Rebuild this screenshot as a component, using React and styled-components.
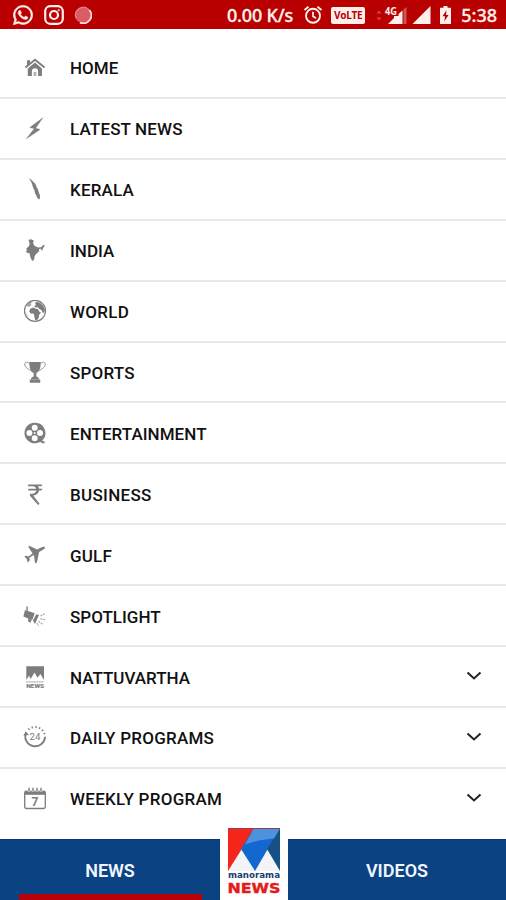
import React from "react";
import styled, { createGlobalStyle } from "styled-components";
import { FaWhatsapp } from "react-icons/fa";

const GlobalStyle = createGlobalStyle`
  * {
    box-sizing: border-box;
  }

  body {
    margin: 0;
    background: #fff;
    font-family: Roboto, "Liberation Sans", sans-serif;
  }
`;

const icons = {
  home: (
    <>
      <path d="M4 4.3h3v3.2L4 10z" />
      <path d="M12 2.400 1.800 10.8l1.200 1.500 9-7.200 9 7.200 1.200-1.500z" />
      <path d="M12 6.600 4.800 12.400V20h4.100v-4.600a3.100 3.100 0 0 1 6.200 0V20h3.800v-7.600z" />
      <path d="M10.600 16h2.800v4h-2.800z" opacity=".6" />
    </>
  ),
  bolt: <path d="M19.600 1 6.800 10.600l4.600 1L3.600 21.600 17 12.500l-4.500-1.200z" stroke="currentColor" strokeWidth=".5" />,
  kerala: <path d="M6 .3c2 1 3.400 2.300 4.400 3.800 1.800 1.200 2.700 2.900 3.100 4.800 1.500 1.600 1.900 3.600 2.300 5.500.8 1.500 1.300 3 1.200 4.500l-.4 2.600c-2.200-.8-3-2.500-3.200-4.300-1.400-1.300-1.800-3-1.800-4.500-1.400-2.500-1.800-4.100-2.300-6C8.600 4.600 7.600 2.500 6 .3z" />,
  india: <path d="M5.500.7 8 .2l2.800 1.300-.7 2.800 1.300 2.400 3.700 1.700 2.900-.2 2.600-2.500 1.300 1-1.700 2-.8 2.700-1-.2-.2-1.500-2.200.2.3 2.100-3.100 3.100-1.600 2-.3 2.900-1.400 1.900-1.300-.9-1.500-3.700-.8-3.500-1.700.4-1.800-1.900 1.200-.9-.7-1.800 2.300-2.200 1.100-2.200z" />,
  world: (
    <>
      <circle cx="12" cy="10.8" r="10.5" fill="none" stroke="currentColor" strokeWidth="1.2" />
      <path d="M12.500 2.300c2.200-1 5 .4 6.500 2.100 1.900 2.100 2.900 4.200 2.800 6.800l-1.800 2-1.600-3.200-2.200-1-1.300-1.800-2.500.4-1.300-1.300 1.900-1.200-.8-1.400z" />
      <path d="m7.200 8.700 3.300-1.100 2.100 1.200 2.200.3 2 3.100h1.300l-2 2.800-.3 2.700-1.900 2.700-1.700-.4-1-3.700-.2-2.500-3.300-.3-1.500-2z" />
      <path d="m3.300 5.500 3-2.900 3-1-1.500 2.100.7 1.200-2.600 2.200zM2.200 13l1.900 1.400 1 2.700z" opacity=".7" />
    </>
  ),
  trophy: (
    <>
      <path d="M6.300 1h11.400c0 5.300-.8 9.600-4.300 11v3.600c1.800.6 2.500 1.400 2.700 2.600H7.900c.2-1.200.9-2 2.700-2.600V12C7.100 10.600 6.300 6.300 6.300 1zM6.800 18.600h10.400v3.200H6.800z" />
      <path d="M6.500 2.600C4.500.6 1.700.9 1.700 3c0 3.200 3.200 4.700 6 6.700M17.500 2.600c2-2 4.800-1.700 4.800.4 0 3.200-3.200 4.700-6 6.700" fill="none" stroke="currentColor" strokeWidth="1" opacity=".8" />
    </>
  ),
  reel: (
    <>
      <path fillRule="evenodd" d="M11.700.7a10.300 10.300 0 1 0 5.600 19c1.200 1.200 2.600 1.800 4.300 1.500l.1-1.700c-1 .1-1.900-.2-2.600-1A10.300 10.300 0 0 0 11.700.7zm0 2a3 3 0 1 1 0 6 3 3 0 0 1 0-6zM6.400 8a3 3 0 1 1 0 6 3 3 0 0 1 0-6zM17 8a3 3 0 1 1 0 6 3 3 0 0 1 0-6zm-5.300 5.300a3 3 0 1 1 0 6 3 3 0 0 1 0-6z" />
      <circle cx="11.7" cy="11" r="1" fill="#fff" />
    </>
  ),
  rupee: <path d="M5.600 1.500h13.800l-1 1.700h-3.500c.6.6 1 1.400 1.200 2.500h3.300l-1 1.700H16c-.5 3-2.600 4.600-5.800 5l6.400 8.300-1.500 1.200-8.200-9.200v-1.900c3.600 0 5.900-.9 6.600-3.400H4.800l1-1.700h7.400c-.5-1.700-1.700-2.500-3.700-2.500H4.600z" />,
  plane: <path d="m5.100 2.500 1.700-.6 7.300 3.500 4-2c1.600-.8 3.400-.9 3.900-.2.4.9-1 1.900-2.400 2.700l-3.500 2L14 18.300l-1.900 1.300-1.200-8.700-4.400 2.500.2 3-2.100 2-.8-3.300-2.500-2.500 1.900-.9 2.300.9 4.100-3.200z" />,
  spotlight: (
    <>
      <path d="M3.400 1.500h1.400v4.300H3.400z" />
      <path d="m2 5 9.700 3.300-2.500 7L.4 11.400z" />
      <path d="m13 9.600 3 .2-4 9.200-2-3.300zM5 13.500l3.500 1.600-.8 2.700-2.500-1.300z" />
      <path d="m17.500 11 4.400-2.300M17.200 13.800l5.500 1M15.600 16.300l4.600 3.200M14 18l1.700 3.200" fill="none" stroke="currentColor" strokeWidth="1.1" opacity=".7" strokeDasharray="2 .7" />
    </>
  ),
  manorama: (
    <>
      <path d="M3.300.3H21V14l-3.600-6-2.900 3.800-3-5.300L7.700 13 6 9.700 3.300 14z" />
      <path d="M3.300 15.800H21" stroke="currentColor" strokeWidth="1.200" strokeDasharray="2 .5" opacity=".6" />
      <text x="3.200" y="22.300" fontSize="6" fontWeight="900" textLength="18" lengthAdjust="spacingAndGlyphs">NEWS</text>
    </>
  ),
  daily: (
    <>
      <path d="M2.300 8.500A10 10 0 1 0 22 12" fill="none" stroke="currentColor" strokeWidth="1.800" />
      <path d="M22 12A10 10 0 0 0 4.500 4.500" fill="none" stroke="currentColor" strokeWidth="2" strokeDasharray="1.300 2.400" />
      <path d="m.4 9.800 2.300-4.500L5.900 9z" />
      <text x="6.500" y="14.300" fontSize="9" textLength="11" lengthAdjust="spacingAndGlyphs">24</text>
    </>
  ),
  weekly: (
    <>
      <rect x="1.700" y="4.300" width="20.600" height="17.200" rx="1.800" fill="none" stroke="currentColor" strokeWidth="1.300" />
      <path d="M1.700 3.800h20.600v4H1.700z" />
      <path d="M6 1v4M10 1v4M14 1v4M18 1v4" stroke="#fff" strokeWidth="2.400" />
      <path d="M6 .8v4M10 .8v4M14 .8v4M18 .8v4" stroke="currentColor" strokeWidth="1.400" />
      <text x="8.600" y="18.700" fontSize="12" fontWeight="700">7</text>
    </>
  ),
};

const menu = [
  { label: "HOME", icon: "home" },
  { label: "LATEST NEWS", icon: "bolt", tracking: 0.15 },
  { label: "KERALA", icon: "kerala", tracking: 0.15 },
  { label: "INDIA", icon: "india" },
  { label: "WORLD", icon: "world", tracking: 0.3 },
  { label: "SPORTS", icon: "trophy", tracking: 0.2 },
  { label: "ENTERTAINMENT", icon: "reel", tracking: 0.05 },
  { label: "BUSINESS", icon: "rupee", tracking: 0.3 },
  { label: "GULF", icon: "plane", tracking: 0.2 },
  { label: "SPOTLIGHT", icon: "spotlight" },
  { label: "NATTUVARTHA", icon: "manorama", expands: true },
  { label: "DAILY PROGRAMS", icon: "daily", tracking: 0.25, expands: true },
  { label: "WEEKLY PROGRAM", icon: "weekly", tracking: 0.28, expands: true },
];

const StatusIcons = () => (
  <StatusBar>
    <Notifications>
      <FaWhatsapp size={22} stroke="currentColor" strokeWidth={14} />
      <svg width="20" height="20" viewBox="0 0 20 20" fill="none" stroke="currentColor">
        <rect x="1.200" y="1.200" width="17.600" height="17.600" rx="5" strokeWidth="2.200" />
        <circle cx="10" cy="10" r="4" strokeWidth="2.200" />
        <circle cx="14.800" cy="5.200" r=".7" />
      </svg>
      <svg width="18" height="18" viewBox="0 0 18 18">
        <circle cx="9" cy="9" r="8.300" fill="#dc5c66" />
        <path d="M15.300 4A8 8 0 0 1 6 16.600" fill="none" stroke="#fbe0e0" strokeWidth="1.800" />
        <path d="M2 12A8 8 0 0 1 15 3.500" fill="none" stroke="#e88a8e" strokeWidth="1" />
      </svg>
    </Notifications>
    <Speed>0.00 K/s</Speed>
    <Alarm width="20" height="20" viewBox="0 0 20 20" fill="none" stroke="currentColor">
      <circle cx="10" cy="10.800" r="7" strokeWidth="1.900" />
      <path d="M10 6.800v4.400l3 2M1.500 5 5.500 1.700M18.500 5l-4-3.300" strokeWidth="1.800" />
    </Alarm>
    <Volte>VoLTE</Volte>
    <Signals width="97" height="24" viewBox="0 0 97 24" fill="currentColor">
      <path d="m12.500 10.500 2.500-3 2.500 3zM12.500 14.500l2.500 3 2.500-3z" opacity=".3" />
      <text x="21" y="11.500" fontSize="10" fontWeight="700" textLength="12" lengthAdjust="spacingAndGlyphs">4G</text>
      <path d="M38.500 7.500V21H24l6-6v-2h4.500v-2z" />
      <path d="M39.500 6.500 42.500 4v17h-3z" opacity=".35" />
      <path d="M66.500 3v18H48.500z" />
      <path fillRule="evenodd" d="M79.500 3h4v1.700H87V21H76V4.700h3.500zm3 4.300-4 6h2.600l-.8 5 4.300-6.300H82z" />
    </Signals>
    <Clock>5:38</Clock>
  </StatusBar>
);

const Logo = () => (
  <svg width="68" height="72" viewBox="0 0 68 72">
    <path d="M8 0h52v43H8z" fill="#f3f4f6" />
    <path d="M8 0h27L8 43z" fill="#f4261c" />
    <path d="M34 0h26L35 43 21 21z" fill="#1268cf" />
    <path d="M60 0v43L47 21z" fill="#174f87" />
    <path d="M34 0h26l-6 10.500c-10 1-20 2.500-29 6z" fill="#4e91dc" />
    <path d="M8 0h52v1H8z" fill="#963d56" />
    <LogoName x="8" y="49.500" textLength="52" lengthAdjust="spacingAndGlyphs">manorama</LogoName>
    <LogoNews x="7.500" y="64.500" textLength="53" lengthAdjust="spacingAndGlyphs">NEWS</LogoNews>
  </svg>
);

const App = () => {
  return (
    <Screen>
      <GlobalStyle />
      <StatusIcons />
      <Menu>
        {menu.map(({ label, icon, tracking, expands }) => (
          <MenuItem key={label}>
            <MenuIcon viewBox="0 0 24 24">{icons[icon]}</MenuIcon>
            <MenuLabel $tracking={tracking}>{label}</MenuLabel>
            {expands && (
              <Chevron viewBox="0 0 16 10">
                <path d="m1.500 1.500 6.500 6 6.500-6" />
              </Chevron>
            )}
          </MenuItem>
        ))}
      </Menu>
      <TabBar>
        <Tab $active $width={220}>NEWS</Tab>
        <LogoTab>
          <Logo />
        </LogoTab>
        <Tab $width={218}>VIDEOS</Tab>
      </TabBar>
    </Screen>
  );
};

export default App;

const Screen = styled.div`
  display: flex;
  flex-direction: column;
  width: 506px;
  height: 900px;
  overflow: hidden;
  background: #fff;
`;

const StatusBar = styled.header`
  display: flex;
  align-items: center;
  height: 29px;
  padding: 1px 9px 0 12px;
  flex-shrink: 0;
  background: #b90000;
  color: #fff0ee;
  font-family: "Noto Sans", sans-serif;
  font-weight: 500;
  font-size: 18px;
`;

const Notifications = styled.div`
  display: flex;
  align-items: center;
  gap: 10px;
  flex: 1;
`;

const Speed = styled.span`
  letter-spacing: -0.15px;
  -webkit-text-stroke: 0.3px currentColor;
  white-space: nowrap;
`;

const Alarm = styled.svg`
  margin: 0 8px 0 10px;
`;

const Volte = styled.span`
  width: 34px;
  height: 17px;
  border-radius: 2px;
  background: #fff0ee;
  color: #b90000;
  font-size: 10px;
  font-weight: 700;
  line-height: 17px;
  letter-spacing: -0.2px;
  text-align: center;
`;

const Signals = styled.svg`
  margin-left: -1px;
`;

const Clock = styled.span`
  -webkit-text-stroke: 0.3px currentColor;
`;

const Menu = styled.ul`
  flex: 1;
  min-height: 0;
  margin: 0;
  padding: 9px 0 0;
  list-style: none;
`;

const MenuItem = styled.li`
  display: flex;
  align-items: center;
  height: 60.92px;
  padding: 2px 24px 0 23px;
  border-bottom: 2px solid #e9e9e9;

  &:last-child {
    border-bottom-color: transparent;
  }
`;

const MenuIcon = styled.svg`
  width: 24px;
  height: 24px;
  margin-right: 23px;
  color: #7d7d7d;
  fill: currentColor;
`;

const MenuLabel = styled.span`
  flex: 1;
  color: #111;
  font-size: 17px;
  font-weight: 500;
  line-height: 20px;
  letter-spacing: ${(props) => props.$tracking || 0}px;
`;

const Chevron = styled.svg`
  width: 16px;
  height: 10px;
  margin-top: -3px;
  fill: none;
  stroke: #222;
  stroke-width: 2;
`;

const TabBar = styled.nav`
  display: flex;
  height: 61px;
  flex-shrink: 0;
`;

const Tab = styled.div`
  display: flex;
  flex-direction: column;
  align-items: center;
  width: ${(props) => props.$width}px;
  padding-top: 21px;
  background: #0b4282;
  border-top: 1px solid #073774;
  color: #f1f5ff;
  font-size: 18px;
  font-weight: 600;
  line-height: 20px;

  &::after {
    content: "";
    width: 183px;
    height: 6px;
    margin-top: auto;
    background: ${(props) => (props.$active ? "#b80008" : "transparent")};
  }
`;

const LogoTab = styled.div`
  width: 68px;
  height: 72px;
  margin-top: -11px;
  background: #fff;
`;

const LogoName = styled.text`
  fill: #173d70;
  font-family: "DejaVu Sans", sans-serif;
  font-size: 9px;
  font-weight: 700;
`;

const LogoNews = styled.text`
  fill: #e51b1b;
  font-family: "DejaVu Sans", sans-serif;
  font-size: 14px;
  font-weight: 700;
  stroke: #e51b1b;
  stroke-width: 0.4px;
`;
